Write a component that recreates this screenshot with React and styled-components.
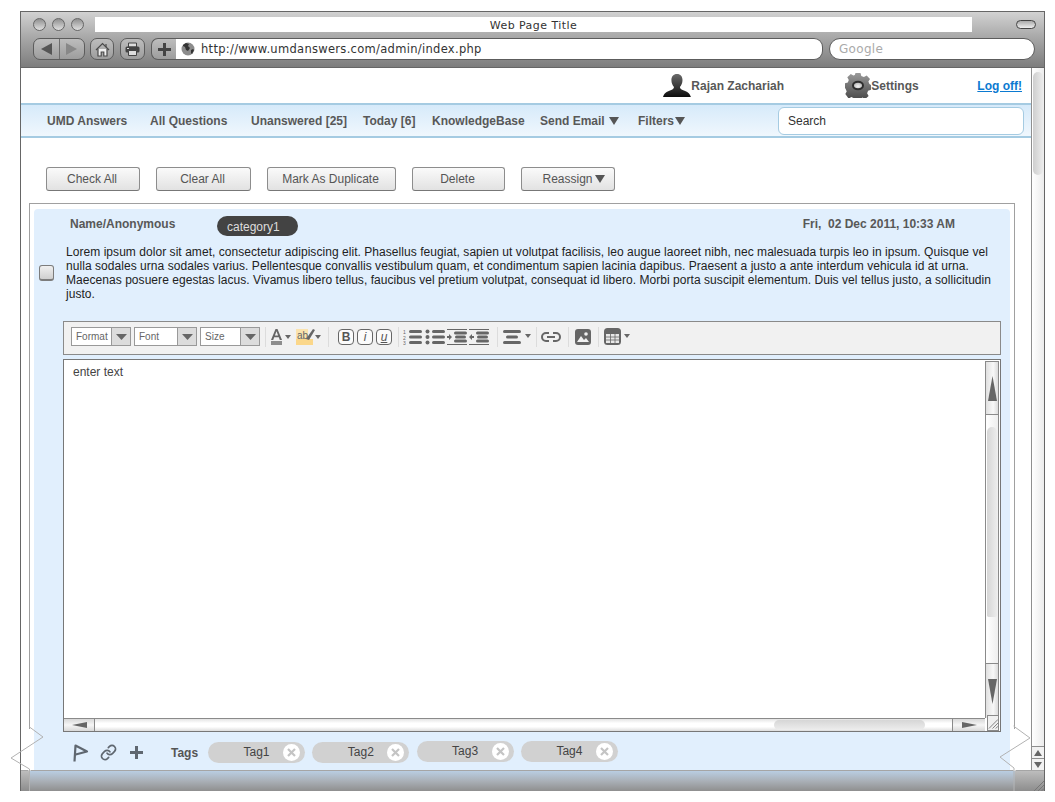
import React from "react";
import styled, { createGlobalStyle } from "styled-components";
import { Link as LinkIcon } from "lucide-react";

const GlobalStyle = createGlobalStyle`
  html, body {
    margin: 0;
    padding: 0;
    background: #fff;
    overflow: hidden;
  }
  * { box-sizing: border-box; }
`;

const Page = styled.div`
  position: relative;
  width: 1055px;
  height: 802px;
  padding: 11px 10px 0 20px;
  font-family: "Liberation Sans", Arial, sans-serif;
  font-size: 12px;
  color: #585858;
`;

const Window = styled.div`
  width: 1025px;
  height: 780px;
  display: flex;
  flex-direction: column;
  border: 1px solid #666;
  border-bottom: 0;
`;

/* browser chrome */
const Chrome = styled.div`
  height: 56px;
  flex: none;
  padding: 5px 8px 0 12px;
  background: linear-gradient(#d2d2d2, #a9a9a9 45%, #7d7d7d);
  border-bottom: 1px solid #666;
  font-family: "DejaVu Sans", Verdana, sans-serif;
`;

const TitleRow = styled.div`
  display: flex;
  align-items: center;
  height: 15px;
`;

const Lights = styled.div`
  display: flex;
  gap: 6px;
  width: 62px;
  flex: none;
`;

const Light = styled.span`
  width: 13px;
  height: 13px;
  border-radius: 50%;
  border: 1px solid #666;
  background: linear-gradient(#8f8f8f, #c8c8c8 70%, #dedede);
`;

const TitleBar = styled.div`
  width: 877px;
  height: 15px;
  padding-top: 1px;
  background: #fff;
  text-align: center;
  font-size: 11px;
  line-height: 15px;
  letter-spacing: 0.45px;
  color: #333;
`;

const Capsule = styled.span`
  width: 20px;
  height: 9px;
  margin-left: 44px;
  border-radius: 5px;
  border: 1px solid #444;
  background: linear-gradient(#aaa, #eee);
`;

const ToolRow = styled.div`
  display: flex;
  align-items: center;
  height: 22px;
  margin-top: 6px;
`;

const ChromeButton = styled.div`
  width: ${(p) => p.$w}px;
  height: 22px;
  margin-right: ${(p) => p.$after || 0}px;
  display: flex;
  align-items: center;
  justify-content: center;
  flex: none;
  border: 1px solid #5c5c5c;
  border-radius: ${(p) => (p.$attached ? "7px 0 0 7px" : "7px")};
  border-right-width: ${(p) => (p.$attached ? 0 : 1)}px;
  background: linear-gradient(#bdbdbd, #9d9d9d);
`;

const NavPair = styled(ChromeButton)`
  justify-content: stretch;
`;

const NavHalf = styled.div`
  flex: 1;
  height: 100%;
  display: flex;
  align-items: center;
  justify-content: center;
  border-left: ${(p) => (p.$divided ? "1px solid #6d6d6d" : "0")};
`;

const UrlField = styled.div`
  width: 647px;
  height: 22px;
  flex: none;
  display: flex;
  align-items: center;
  gap: 6px;
  padding-left: 5px;
  background: #fff;
  border: 1px solid #5c5c5c;
  border-left: 0;
  border-radius: 0 9px 9px 0;
  font-size: 11.5px;
  letter-spacing: 0.3px;
  color: #333;
`;

const GoogleField = styled.div`
  width: 206px;
  height: 22px;
  margin-left: 6px;
  flex: none;
  padding-left: 9px;
  background: #fff;
  border: 1px solid #5c5c5c;
  border-radius: 11px;
  font-size: 12px;
  line-height: 20px;
  letter-spacing: 0.3px;
  color: #aaa;
`;

/* page body */
const Body = styled.div`
  flex: 1;
  min-height: 0;
  display: flex;
`;

const Content = styled.div`
  flex: 1;
  min-width: 0;
  display: flex;
  flex-direction: column;
`;

const TopBar = styled.div`
  height: 35px;
  flex: none;
  display: flex;
  align-items: center;
  justify-content: flex-end;
  font-weight: bold;
`;

const UserLink = styled.div`
  display: flex;
  align-items: center;
  width: ${(p) => p.$w}px;
  flex: none;
`;

const LogOff = styled.a`
  margin-right: 9px;
  color: #0b7ad1;
  text-decoration: underline;
`;

const NavBar = styled.div`
  height: 35px;
  flex: none;
  display: flex;
  align-items: center;
  padding-left: 26px;
  border-top: 2px solid #a5cbe2;
  border-bottom: 2px solid #a5cbe2;
  background: linear-gradient(#d6eafa, #f0f7fd);
  font-weight: bold;
`;

const NavItem = styled.div`
  width: ${(p) => p.$w}px;
  flex: none;
  display: flex;
  align-items: center;
  gap: ${(p) => p.$gap}px;
`;

const Caret = styled.span`
  width: 0;
  height: 0;
  border-left: 5px solid transparent;
  border-right: 5px solid transparent;
  border-top: 8px solid #555;
`;

const SearchBox = styled.div`
  width: 246px;
  height: 28px;
  margin-left: auto;
  margin-right: 7px;
  padding-left: 9px;
  background: #fff;
  border: 1px solid #a5cbe2;
  border-radius: 6px;
  font-weight: normal;
  line-height: 26px;
  color: #333;
`;

const Actions = styled.div`
  height: 65px;
  flex: none;
  display: flex;
  gap: 16px;
  padding: 29px 0 0 25px;
`;

const ActionButton = styled.div`
  width: ${(p) => p.$w}px;
  height: 24px;
  display: flex;
  align-items: center;
  justify-content: center;
  gap: 2px;
  padding: 0 2px 0 ${(p) => p.$indent || 0}px;
  border: 1px solid #8d8d8d;
  border-bottom-color: #777;
  border-radius: 3px;
  background: linear-gradient(#fafafa, #e2e2e2);
  color: #555;
`;

const Panel = styled.div`
  flex: 1;
  min-height: 0;
  width: 986px;
  margin-left: 8px;
  padding: 5px 4px 0;
  border: 1px solid #a0a0a0;
  border-bottom: 0;
  display: flex;
`;

const Card = styled.div`
  flex: 1;
  padding-top: 7px;
  border-radius: 4px 4px 0 0;
  background: #e1effd;
  overflow: hidden;
`;

const CardHead = styled.div`
  display: flex;
  align-items: flex-start;
  padding-left: 36px;
  line-height: 16px;
  font-weight: bold;
`;

const Author = styled.div`
  width: 147px;
  flex: none;
`;

const Category = styled.div`
  width: 81px;
  height: 20px;
  padding-left: 10px;
  border-radius: 10px;
  background: #434343;
  color: #ddd;
  font-weight: normal;
  line-height: 22px;
`;

const Posted = styled.div`
  margin-left: auto;
  margin-right: 55px;
  white-space: pre;
`;

const Question = styled.div`
  display: flex;
  align-items: center;
  gap: 12px;
  margin-top: 9px;
  padding-left: 5px;
`;

const Check = styled.span`
  width: 15px;
  height: 16px;
  flex: none;
  border: 1px solid #7c7c7c;
  border-bottom-width: 2px;
  border-radius: 3px;
  background: linear-gradient(#f0f0f0, #cfcfcf);
`;

const QuestionText = styled.p`
  margin: 0;
  width: 932px;
  line-height: 14px;
  letter-spacing: 0.05px;
  color: #222;
`;

const EditorWrap = styled.div`
  margin: 20px 9px 0 29px;
`;

const Toolbar = styled.div`
  height: 34px;
  display: flex;
  align-items: center;
  padding: 0 0 3px 7px;
  border: 1px solid #8a8a8a;
  background: #f1f1f1;
`;

const Select = styled.div`
  width: ${(p) => p.$w}px;
  height: 19px;
  margin-right: 3px;
  flex: none;
  display: flex;
  border: 1px solid #999;
  background: #fff;
  font-size: 10px;
  line-height: 18px;
  color: #666;
`;

const SelectLabel = styled.span`
  flex: 1;
  padding-left: 4px;
`;

const SelectArrow = styled.span`
  width: 19px;
  flex: none;
  display: flex;
  align-items: center;
  justify-content: center;
  background: #dcdcdc;
  border-left: 1px solid #999;
`;

const Sep = styled.span`
  width: 1px;
  height: 20px;
  flex: none;
  margin: 0 ${(p) => p.$after}px 0 ${(p) => p.$before}px;
  background: #dcdcdc;
`;

const ToolIcons = styled.div`
  display: flex;
  align-items: center;
  gap: ${(p) => p.$gap || 0}px;
  flex: none;
`;

const Editor = styled.div`
  height: 373px;
  margin-top: 4px;
  display: grid;
  grid-template-columns: 1fr 15px;
  grid-template-rows: 1fr 13px;
  border: 1px solid #777;
  background: #fff;
`;

const EditArea = styled.div`
  padding: 5px 9px;
  color: #444;
`;

const VScroll = styled.div`
  display: flex;
  flex-direction: column;
  margin-top: 1px;
  margin-right: 1px;
  border: 1px solid #8a8a8a;
  border-bottom: 0;
  background: linear-gradient(90deg, #fff, #eee);
`;

const VButton = styled.div`
  height: ${(p) => p.$h}px;
  flex: none;
  display: flex;
  align-items: center;
  justify-content: center;
  background: linear-gradient(90deg, #e0e0e0, #f8f8f8 60%, #dcdcdc);
  border-${(p) => p.$side}: 1px solid #8a8a8a;
`;

const VTrack = styled.div`
  flex: 1;
  padding: 12px 1px 46px;
`;

const VThumb = styled.div`
  height: 100%;
  border-radius: 6px 6px 2px 2px;
  background: linear-gradient(90deg, #d6d6d6, #ececec);
`;

const HScroll = styled.div`
  display: flex;
  border-top: 1px solid #8a8a8a;
  background: linear-gradient(#e4e4e4, #fff 35%, #fff 65%, #ddd);
`;

const HButton = styled.div`
  width: ${(p) => p.$w}px;
  flex: none;
  display: flex;
  align-items: center;
  justify-content: center;
  background: linear-gradient(#d8d8d8, #f6f6f6 50%, #d8d8d8);
  border-${(p) => p.$side}: 1px solid #8a8a8a;
`;

const HTrack = styled.div`
  flex: 1;
  padding: 1px 27px 1px 679px;
`;

const HThumb = styled.div`
  height: 100%;
  border-radius: 5px;
  background: linear-gradient(#d6d6d6, #ededed);
`;

const Corner = styled.div`
  position: relative;
  margin: -3px 1px 0 2px;
  border: 1px solid #8a8a8a;
  background: #f0f0f0;
  display: flex;
  align-items: center;
  justify-content: center;
`;

const TagRow = styled.div`
  display: flex;
  align-items: center;
  height: 41px;
  padding-left: 39px;
`;

const TagIcon = styled.span`
  display: flex;
  flex: none;
  margin-right: ${(p) => p.$after}px;
`;

const TagsLabel = styled.span`
  width: 37px;
  flex: none;
  font-weight: bold;
  color: #555;
`;

const TagList = styled.div`
  display: flex;
  align-items: center;
  gap: 7.3px;
`;

const Tag = styled.div`
  position: relative;
  width: 97px;
  height: 21px;
  margin-top: ${(p) => (p.$raised ? -2 : 0)}px;
  border-radius: 11px;
  background: #d1d1d1;
  color: #444;
  text-align: center;
  line-height: 21px;
`;

const TagClose = styled.span`
  position: absolute;
  top: 2px;
  right: 5px;
  width: 17px;
  height: 17px;
  border-radius: 50%;
  background: #fff;
  display: flex;
  align-items: center;
  justify-content: center;
`;

/* page scrollbar */
const PageScroll = styled.div`
  width: 13px;
  flex: none;
  display: flex;
  flex-direction: column;
  border-left: 1px solid #8f8f8f;
  background: linear-gradient(90deg, #fff, #ececec);
`;

const PageThumbArea = styled.div`
  flex: 1;
  padding: 4px 1px 0;
`;

const PageThumb = styled.div`
  height: 103px;
  border-radius: 6px;
  background: linear-gradient(90deg, #cfcfcf, #ebebeb);
`;

const PageArrow = styled.div`
  height: 12px;
  flex: none;
  display: flex;
  align-items: center;
  justify-content: center;
  border-top: 1px solid #8f8f8f;
  background: #f2f2f2;
`;

/* window footer */
const Footer = styled.div`
  height: 21px;
  flex: none;
  display: flex;
  border-top: 1px solid #a5a5a5;
  background: linear-gradient(#bdbdbd, #8d8d8d);
`;

const FooterEdge = styled.div`
  width: ${(p) => p.$w}px;
  flex: none;
  display: flex;
  align-items: flex-end;
  justify-content: flex-end;
`;

const FooterTint = styled.div`
  flex: 1;
  background: linear-gradient(#b9cde2, #aab0b7 50%, #8f8f8f);
`;

const TornEdges = styled.svg`
  position: absolute;
  inset: 0;
  pointer-events: none;
`;

const FormatButton = styled.span`
  width: 16px;
  height: 16px;
  flex: none;
  display: flex;
  align-items: center;
  justify-content: center;
  border: 1.5px solid #666;
  border-radius: 4px;
  background: #fbfbfb;
  font-size: 12px;
  line-height: 12px;
  font-weight: ${(p) => (p.$bold ? "bold" : "normal")};
  font-style: ${(p) => (p.$italic ? "italic" : "normal")};
  text-decoration: ${(p) => (p.$under ? "underline" : "none")};
  color: #555;
`;

const Arrow = ({ d, w, h, fill = "#666" }) => (
  <svg width={w} height={h} viewBox={`0 0 ${w} ${h}`}>
    <path d={d} fill={fill} />
  </svg>
);

const Globe = () => (
  <svg width="14" height="14" viewBox="0 0 14 14">
    <circle cx="7" cy="7" r="6.5" fill="#8c8c8c" />
    <path d="M2 3l3-2 3 1-1 2 2 2-2 3-2-1-1-3-2-1zM10 8l2-1 1 1-2 4-1-1z" fill="#333" />
  </svg>
);

const HomeGlyph = () => (
  <svg width="15" height="15" viewBox="0 0 15 15" fill="none" stroke="#4a4a4a" strokeWidth="1.2">
    <path d="M1 8l6.5-6.5L14 8" />
    <path d="M3 7v7h3.2v-4h2.6v4H12V7" fill="#efefef" />
    <path d="M11 2v3" />
  </svg>
);

const PrintGlyph = () => (
  <svg width="15" height="14" viewBox="0 0 15 14">
    <path d="M3.5 1h8v4h-8z" fill="#ddd" stroke="#444" />
    <rect x="0.5" y="4.5" width="14" height="6" rx="1.5" fill="#444" />
    <rect x="2" y="6" width="2" height="1" fill="#ddd" />
    <path d="M3.5 8.5h8v5h-8z" fill="#ddd" stroke="#444" />
  </svg>
);

const UserGlyph = () => (
  <svg width="28" height="23" viewBox="0 0 28 23">
    <defs>
      <linearGradient id="userFill" x1="0" y1="0" x2="0" y2="1">
        <stop offset="0" stopColor="#6a6a6a" />
        <stop offset="1" stopColor="#0d0d0d" />
      </linearGradient>
    </defs>
    <path
      d="M14 0c3.6 0 5.5 2.6 5.5 6 0 3-1.2 5.6-2.6 7 .2 1.6 1 2.3 4 3.4 3.2 1.2 5.9 2.4 7 6.6H0c1.1-4.2 3.8-5.4 7-6.6 3-1.1 3.8-1.8 4-3.4-1.4-1.4-2.6-4-2.6-7C8.4 2.6 10.4 0 14 0z"
      fill="url(#userFill)"
    />
  </svg>
);

const GearGlyph = () => (
  <svg width="26" height="25" viewBox="0 0 26 25">
    <defs>
      <linearGradient id="gearFill" x1="0" y1="0" x2="0" y2="1">
        <stop offset="0" stopColor="#9a9a9a" />
        <stop offset="1" stopColor="#444" />
      </linearGradient>
      <radialGradient id="gearHole" cx="0.5" cy="0.6" r="0.6">
        <stop offset="0" stopColor="#f4f4f4" />
        <stop offset="1" stopColor="#a8a8a8" />
      </radialGradient>
    </defs>
    <path
      d="M10.5 0h5l.8 3 2.6 1.1 2.8-1.5 3.3 3.4-1.6 2.6 1 2.5 1.6.9v4.8l-2.9.9-1 2.5 1.5 2.7-3.4 3.2-2.6-1.5-2.3 1-.8 2.4h-5l-.8-2.900-2.400-1-2.600 1.500L.3 21.100l1.400-2.700-1-2.400L0 15.100v-4.800l2.800-.9 1-2.500L2.300 4.300l3.500-3.300 2.600 1.500 1.400-.6z"
      fill="url(#gearFill)"
    />
    <ellipse cx="13" cy="12.5" rx="5" ry="3.8" fill="url(#gearHole)" stroke="#2e2e2e" strokeWidth="2" />
  </svg>
);

const FlagGlyph = () => (
  <svg width="16" height="18" viewBox="0 0 16 18" fill="none" stroke="#5f6770" strokeWidth="2.2">
    <path d="M1.5 17.5L2.5 1.5l11.5 6-11.3 3" strokeLinejoin="round" />
  </svg>
);

const PlusGlyph = ({ fill = "#5f6770" }) => (
  <svg width="13" height="13" viewBox="0 0 13 13">
    <path d="M5 0h3v5h5v3H8v5H5V8H0V5h5z" fill={fill} />
  </svg>
);

const CloseGlyph = () => (
  <svg width="9" height="9" viewBox="0 0 9 9" stroke="#c4c4c4" strokeWidth="2.2">
    <path d="M1 1l7 7M8 1L1 8" />
  </svg>
);

const ColorGlyph = () => (
  <svg width="20" height="18" viewBox="0 0 20 18">
    <path d="M0 12L4.500 1h2L11 12H8.800l-1-2.800H3.200l-1 2.800zM3.900 7.500h3.200L5.500 3.200z" fill="#666" />
    <rect x="0" y="13" width="11" height="4" fill="#8d8d8d" />
    <path d="M14 7h6l-3 4z" fill="#666" />
  </svg>
);

const HighlightGlyph = () => (
  <svg width="25" height="18" viewBox="0 0 25 18">
    <rect x="0" y="11" width="17" height="6" fill="#fbd78a" />
    <rect x="0" y="1" width="12" height="10" fill="#fbe3ad" />
    <text x="1" y="11" fontFamily="Liberation Sans" fontSize="10" fill="#666">ab</text>
    <path d="M10 11l7-10 2 1-6 10z" fill="#666" />
    <path d="M19 7h6l-3 4z" fill="#666" />
  </svg>
);

const NumberedList = () => (
  <svg width="20" height="16" viewBox="0 0 20 16">
    <text x="0" y="5" fontSize="5" fontFamily="Liberation Sans" fill="#666">1</text>
    <text x="0" y="10.5" fontSize="5" fontFamily="Liberation Sans" fill="#666">2</text>
    <text x="0" y="16" fontSize="5" fontFamily="Liberation Sans" fill="#666">3</text>
    <rect x="6" y="1" width="13" height="3" rx="1.5" fill="#666" />
    <rect x="6" y="6.5" width="13" height="3" rx="1.5" fill="#666" />
    <rect x="6" y="12" width="13" height="3" rx="1.5" fill="#666" />
  </svg>
);

const BulletList = () => (
  <svg width="20" height="16" viewBox="0 0 20 16" fill="#666">
    <circle cx="2.5" cy="2.5" r="2" />
    <circle cx="2.5" cy="8" r="2" />
    <circle cx="2.5" cy="13.5" r="2" />
    <rect x="7" y="1" width="13" height="3" rx="1.5" />
    <rect x="7" y="6.5" width="13" height="3" rx="1.5" />
    <rect x="7" y="12" width="13" height="3" rx="1.5" />
  </svg>
);

const IndentGlyph = ({ out }) => (
  <svg width="20" height="16" viewBox="0 0 20 16" fill="#666">
    <rect x="0" y="0" width="20" height="1" />
    <rect x="0" y="15" width="20" height="1" />
    <rect x="7" y="2.5" width="13" height="3" rx="1.5" />
    <rect x="7" y="10.5" width="13" height="3" rx="1.5" />
    <rect x="8" y="6.5" width="11" height="3" rx="1.5" />
    <path d={out ? "M0 8l3-3v2h2v2H3v2z" : "M5 8L2 5v2H0v2h2v2z"} />
  </svg>
);

const AlignGlyph = () => (
  <svg width="28" height="16" viewBox="0 0 28 16" fill="#666">
    <rect x="0" y="1" width="18" height="3" rx="1.5" />
    <rect x="3" y="6.5" width="12" height="3" rx="1.5" />
    <rect x="0" y="12" width="18" height="3" rx="1.5" />
    <path d="M22 5h6l-3 4z" />
  </svg>
);

const ChainGlyph = () => (
  <svg width="20" height="12" viewBox="0 0 20 12" fill="none" stroke="#666" strokeWidth="2">
    <path d="M8 2H5a4 4 0 000 8h3M12 2h3a4 4 0 010 8h-3M6 6h8" />
  </svg>
);

const ImageGlyph = () => (
  <svg width="16" height="16" viewBox="0 0 16 16">
    <rect x="0" y="0" width="16" height="16" rx="3" fill="#666" />
    <circle cx="11" cy="5" r="1.8" fill="#f1f1f1" />
    <path d="M2 13l4-6 3 4 2-2 3 4z" fill="#f1f1f1" />
  </svg>
);

const TableGlyph = () => (
  <svg width="26" height="17" viewBox="0 0 26 17">
    <rect x="0" y="0" width="17" height="17" rx="3.5" fill="#666" />
    <path d="M2 6h13v9H2z" fill="#e8e8e8" />
    <path d="M2 9h13M2 12h13M6.5 6v9M11 6v9" stroke="#666" strokeWidth="0.8" />
    <path d="M20 6h6l-3 4z" fill="#666" />
  </svg>
);

const Grip = () => (
  <svg width="11" height="11" viewBox="0 0 11 11" stroke="#777" fill="none">
    <path d="M1 11L11 1M5 11l6-6M8.5 11L11 8.5" />
  </svg>
);

const navItems = [
  ["UMD Answers", 103, false, 4],
  ["All Questions", 101, false, 4],
  ["Unanswered [25]", 112, false, 4],
  ["Today [6]", 69, false, 4],
  ["KnowledgeBase", 108, false, 4],
  ["Send Email", 98, true, 4],
  ["Filters", 60, true, 1],
];

const actionButtons = [
  ["Check All", 94],
  ["Clear All", 95],
  ["Mark As Duplicate", 129],
  ["Delete", 93],
  ["Reassign", 94, true],
];

const selects = [
  ["Format", 60],
  ["Font", 63],
  ["Size", 60],
];

const tags = ["Tag1", "Tag2", "Tag3", "Tag4"];

const lorem =
  "Lorem ipsum dolor sit amet, consectetur adipiscing elit. Phasellus feugiat, sapien ut volutpat facilisis, leo augue laoreet nibh, nec malesuada turpis leo in ipsum. Quisque vel nulla sodales urna sodales varius. Pellentesque convallis vestibulum quam, et condimentum sapien lacinia dapibus. Praesent a justo a ante interdum vehicula id at urna. Maecenas posuere egestas lacus. Vivamus libero tellus, faucibus vel pretium volutpat, consequat id libero. Morbi porta suscipit elementum. Duis vel tellus justo, a sollicitudin justo.";

const App = () => {
  return (
    <Page>
      <GlobalStyle />
      <Window>
        <Chrome>
          <TitleRow>
            <Lights>
              <Light />
              <Light />
              <Light />
            </Lights>
            <TitleBar>Web Page Title</TitleBar>
            <Capsule />
          </TitleRow>
          <ToolRow>
            <NavPair $w={52} $after={5}>
              <NavHalf>
                <Arrow w={11} h={12} d="M0 6l11-6v12z" fill="#555" />
              </NavHalf>
              <NavHalf $divided>
                <Arrow w={11} h={12} d="M11 6L0 0v12z" fill="#888" />
              </NavHalf>
            </NavPair>
            <ChromeButton $w={24} $after={6}>
              <HomeGlyph />
            </ChromeButton>
            <ChromeButton $w={25} $after={6}>
              <PrintGlyph />
            </ChromeButton>
            <ChromeButton $w={25} $attached>
              <PlusGlyph fill="#444" />
            </ChromeButton>
            <UrlField>
              <Globe />
              http://www.umdanswers.com/admin/index.php
            </UrlField>
            <GoogleField>Google</GoogleField>
          </ToolRow>
        </Chrome>

        <Body>
          <Content>
            <TopBar>
              <UserLink $w={182}>
                <UserGlyph />
                Rajan Zachariah
              </UserLink>
              <UserLink $w={132}>
                <GearGlyph />
                Settings
              </UserLink>
              <LogOff>Log off!</LogOff>
            </TopBar>

            <NavBar>
              {navItems.map(([label, width, hasCaret, gap]) => (
                <NavItem key={label} $w={width} $gap={gap}>
                  {label}
                  {hasCaret && <Caret />}
                </NavItem>
              ))}
              <SearchBox>Search</SearchBox>
            </NavBar>

            <Actions>
              {actionButtons.map(([label, width, hasCaret]) => (
                <ActionButton key={label} $w={width} $indent={hasCaret ? 13 : 0}>
                  {label}
                  {hasCaret && <Caret />}
                </ActionButton>
              ))}
            </Actions>

            <Panel>
              <Card>
                <CardHead>
                  <Author>Name/Anonymous</Author>
                  <Category>category1</Category>
                  <Posted>Fri,  02 Dec 2011, 10:33 AM</Posted>
                </CardHead>
                <Question>
                  <Check />
                  <QuestionText>{lorem}</QuestionText>
                </Question>
                <EditorWrap>
                  <Toolbar>
                    {selects.map(([label, width]) => (
                      <Select key={label} $w={width}>
                        <SelectLabel>{label}</SelectLabel>
                        <SelectArrow>
                          <Arrow w={11} h={6} d="M0 0h11L5.5 6z" />
                        </SelectArrow>
                      </Select>
                    ))}
                    <Sep $before={2} $after={5} />
                    <ToolIcons $gap={5}>
                      <ColorGlyph />
                      <HighlightGlyph />
                    </ToolIcons>
                    <Sep $before={7} $after={9} />
                    <ToolIcons $gap={3}>
                      <FormatButton $bold>B</FormatButton>
                      <FormatButton $italic>i</FormatButton>
                      <FormatButton $italic $under>u</FormatButton>
                    </ToolIcons>
                    <Sep $before={6} $after={4} />
                    <ToolIcons $gap={2}>
                      <NumberedList />
                      <BulletList />
                      <IndentGlyph />
                      <IndentGlyph out />
                    </ToolIcons>
                    <Sep $before={8} $after={5} />
                    <AlignGlyph />
                    <Sep $before={5} $after={4} />
                    <ChainGlyph />
                    <Sep $before={7} $after={6} />
                    <ImageGlyph />
                    <Sep $before={7} $after={5} />
                    <TableGlyph />
                  </Toolbar>
                  <Editor>
                    <EditArea>enter text</EditArea>
                    <VScroll>
                      <VButton $h={53} $side="bottom">
                        <Arrow w={9} h={25} d="M4.5 0L9 25H0z" />
                      </VButton>
                      <VTrack>
                        <VThumb />
                      </VTrack>
                      <VButton $h={55} $side="top">
                        <Arrow w={9} h={25} d="M4.5 25L9 0H0z" />
                      </VButton>
                    </VScroll>
                    <HScroll>
                      <HButton $w={31} $side="right">
                        <Arrow w={15} h={6} d="M0 3l15-3v6z" />
                      </HButton>
                      <HTrack>
                        <HThumb />
                      </HTrack>
                      <HButton $w={33} $side="left">
                        <Arrow w={15} h={6} d="M15 3L0 0v6z" />
                      </HButton>
                    </HScroll>
                    <Corner>
                      <Grip />
                    </Corner>
                  </Editor>
                </EditorWrap>
                <TagRow>
                  <TagIcon $after={11}>
                    <FlagGlyph />
                  </TagIcon>
                  <TagIcon $after={13}>
                    <LinkIcon size={17} color="#5f6770" strokeWidth={2.4} />
                  </TagIcon>
                  <TagIcon $after={28}>
                    <PlusGlyph />
                  </TagIcon>
                  <TagsLabel>Tags</TagsLabel>
                  <TagList>
                    {tags.map((tag, index) => (
                      <Tag key={tag} $raised={index > 1}>
                        {tag}
                        <TagClose>
                          <CloseGlyph />
                        </TagClose>
                      </Tag>
                    ))}
                  </TagList>
                </TagRow>
              </Card>
            </Panel>
          </Content>

          <PageScroll>
            <PageThumbArea>
              <PageThumb />
            </PageThumbArea>
            <PageArrow>
              <Arrow w={8} h={6} d="M4 0l4 6H0z" />
            </PageArrow>
            <PageArrow>
              <Arrow w={8} h={6} d="M4 6l4-6H0z" />
            </PageArrow>
          </PageScroll>
        </Body>

        <Footer>
          <FooterEdge $w={9} />
          <FooterTint />
          <FooterEdge $w={29}>
            <Grip />
          </FooterEdge>
        </Footer>
      </Window>

      <TornEdges width="1055" height="802" viewBox="0 0 1055 802">
        <path d="M29.5 729v42M1014.5 729v42" stroke="#fff" strokeWidth="2" />
        <path
          d="M29.5 727L43 737 11 758l18.5 11v22M1013.5 726L1030 738l-30 19 14 11v23"
          fill="none"
          stroke="#b2b2b2"
        />
      </TornEdges>
    </Page>
  );
};

export default App;
